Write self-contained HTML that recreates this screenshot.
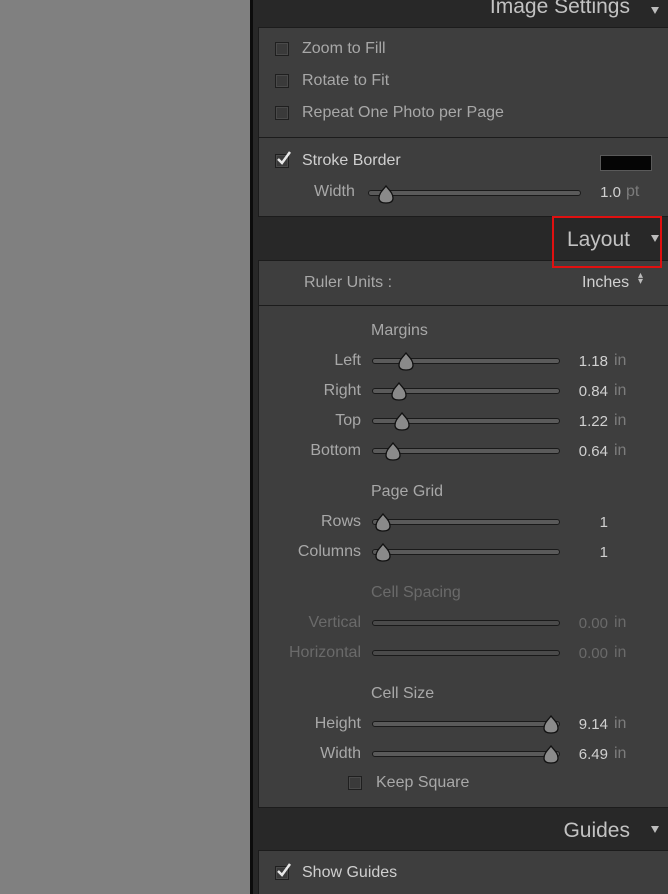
<!DOCTYPE html>
<html style="overflow:hidden;width:668px;height:894px"><head><style>
*{margin:0;padding:0;box-sizing:border-box}
body{width:668px;height:894px;background:#808080;position:relative;overflow:hidden;font-family:"Liberation Sans",sans-serif}
.a{position:absolute}
.side{left:250px;top:0;width:418px;height:894px;background:#282828;border-left:3px solid #0c0c0c}
.hdr{color:#c2c2c2;font-size:21px;right:38px;position:absolute}
.tri{position:absolute;right:9px;width:0;height:0;border-left:4px solid transparent;border-right:4px solid transparent;border-top:7px solid #bdbdbd}
.pan{position:absolute;left:258px;width:420px;background:#3e3e3e;border:1px solid #1c1c1c}
.t{position:absolute;font-size:16px;color:#a8a8a8;white-space:nowrap}
.cb{position:absolute;width:14px;height:14px;border:1px solid #1f1f1f;background:#3a3a3a;box-shadow:inset 0 0 0 1px #4a4a4a}
.lab{position:absolute;right:307px;font-size:16px;color:#a8a8a8;text-align:right}
.trk{position:absolute;left:372px;width:188px;height:6px;border:1px solid #1a1a1a;border-radius:3px;background:#5a5a5a}
.val{position:absolute;right:60px;font-size:15px;color:#d0d0d0;text-align:right}
.unit{position:absolute;left:614px;font-size:16px;color:#7c7c7c}
.sec{position:absolute;left:371px;font-size:16px;color:#a8a8a8}
.a.dim,.lab.dim,.val.dim,.unit.dim,.sec.dim{color:#6a6a6a}
</style></head><body>
<div class="a side"></div>
<div class="hdr" style="top:-5px">Image Settings</div>
<div class="tri" style="top:7px"></div>
<div class="pan" style="top:27px;height:111px"></div>
<div class="cb" style="left:275px;top:42px"></div><div class="t" style="left:302px;top:40px">Zoom to Fill</div>
<div class="cb" style="left:275px;top:74px"></div><div class="t" style="left:302px;top:72px">Rotate to Fit</div>
<div class="cb" style="left:275px;top:106px"></div><div class="t" style="left:302px;top:104px">Repeat One Photo per Page</div>
<div class="pan" style="top:137px;height:80px"></div>
<div class="cb" style="left:275px;top:154px"></div>
<svg class="a" style="left:275px;top:149px" width="18" height="18"><path d="M3 10 L7 14 L15 3" stroke="#e8e8e8" stroke-width="2.5" fill="none"/></svg>
<div class="t" style="left:302px;top:152px;color:#cfcfcf">Stroke Border</div>
<div class="a" style="left:600px;top:155px;width:52px;height:16px;background:#050505;border:1px solid #5a5a5a"></div>
<div class="t" style="left:314px;top:183px">Width</div>
<div class="trk" style="left:368px;width:213px;top:190px"></div>
<div class="val" style="right:47px;top:184px">1.0</div><div class="unit" style="left:626px;top:183px">pt</div>
<div class="pan" style="top:260px;height:548px"></div>
<div class="hdr" style="top:228px">Layout</div>
<div class="tri" style="top:235px"></div>
<div class="a" style="left:552px;top:216px;width:110px;height:52px;border:2px solid #e01010"></div>
<div class="a" style="left:259px;top:305px;width:420px;height:1px;background:#1c1c1c"></div>
<div class="t" style="left:304px;top:274px">Ruler Units :</div>
<div class="t" style="left:582px;top:274px;color:#d0d0d0">Inches</div>
<div class="t" style="left:638px;top:273px;font-size:10px;color:#bbb;line-height:6px">▴<br>▾</div>

<div class="sec" style="top:322px">Margins</div>
<div class="lab" style="top:352px">Left</div><div class="trk" style="top:358px"></div><div class="val" style="top:353px">1.18</div><div class="unit" style="top:352px">in</div>
<div class="lab" style="top:382px">Right</div><div class="trk" style="top:388px"></div><div class="val" style="top:383px">0.84</div><div class="unit" style="top:382px">in</div>
<div class="lab" style="top:412px">Top</div><div class="trk" style="top:418px"></div><div class="val" style="top:413px">1.22</div><div class="unit" style="top:412px">in</div>
<div class="lab" style="top:442px">Bottom</div><div class="trk" style="top:448px"></div><div class="val" style="top:443px">0.64</div><div class="unit" style="top:442px">in</div>

<div class="sec" style="top:483px">Page Grid</div>
<div class="lab" style="top:513px">Rows</div><div class="trk" style="top:519px"></div><div class="val" style="top:514px">1</div>
<div class="lab" style="top:543px">Columns</div><div class="trk" style="top:549px"></div><div class="val" style="top:544px">1</div>

<div class="sec dim" style="top:584px">Cell Spacing</div>
<div class="lab dim" style="top:614px">Vertical</div><div class="trk" style="top:620px;background:#4a4a4a"></div><div class="val dim" style="top:615px">0.00</div><div class="unit dim" style="top:614px">in</div>
<div class="lab dim" style="top:644px">Horizontal</div><div class="trk" style="top:650px;background:#4a4a4a"></div><div class="val dim" style="top:645px">0.00</div><div class="unit dim" style="top:644px">in</div>

<div class="sec" style="top:685px">Cell Size</div>
<div class="lab" style="top:715px">Height</div><div class="trk" style="top:721px"></div><div class="val" style="top:716px">9.14</div><div class="unit" style="top:715px">in</div>
<div class="lab" style="top:745px">Width</div><div class="trk" style="top:751px"></div><div class="val" style="top:746px">6.49</div><div class="unit" style="top:745px">in</div>
<div class="cb" style="left:348px;top:776px"></div><div class="t" style="left:376px;top:774px">Keep Square</div>

<svg class="a" style="left:0;top:0" width="668" height="894">
<defs><path id="tp" d="M0 -9 C3 -5 7 -2 7 3 C7 7 4 8 0 8 C-4 8 -7 7 -7 3 C-7 -2 -3 -5 0 -9Z" fill="#8a8a8a" stroke="#111" stroke-width="1.3"/></defs>
<use href="#tp" x="386" y="195"/>
<use href="#tp" x="406" y="362"/>
<use href="#tp" x="399" y="392"/>
<use href="#tp" x="402" y="422"/>
<use href="#tp" x="393" y="452"/>
<use href="#tp" x="383" y="523"/>
<use href="#tp" x="383" y="553"/>
<use href="#tp" x="551" y="725"/>
<use href="#tp" x="551" y="755"/>
</svg>

<div class="hdr" style="top:819px">Guides</div>
<div class="tri" style="top:826px"></div>
<div class="pan" style="top:850px;height:44px;border-bottom:none"></div>
<div class="cb" style="left:275px;top:866px"></div>
<svg class="a" style="left:275px;top:861px" width="18" height="18"><path d="M3 10 L7 14 L15 3" stroke="#e8e8e8" stroke-width="2.5" fill="none"/></svg>
<div class="t" style="left:302px;top:864px;color:#cfcfcf">Show Guides</div>
</body></html>
